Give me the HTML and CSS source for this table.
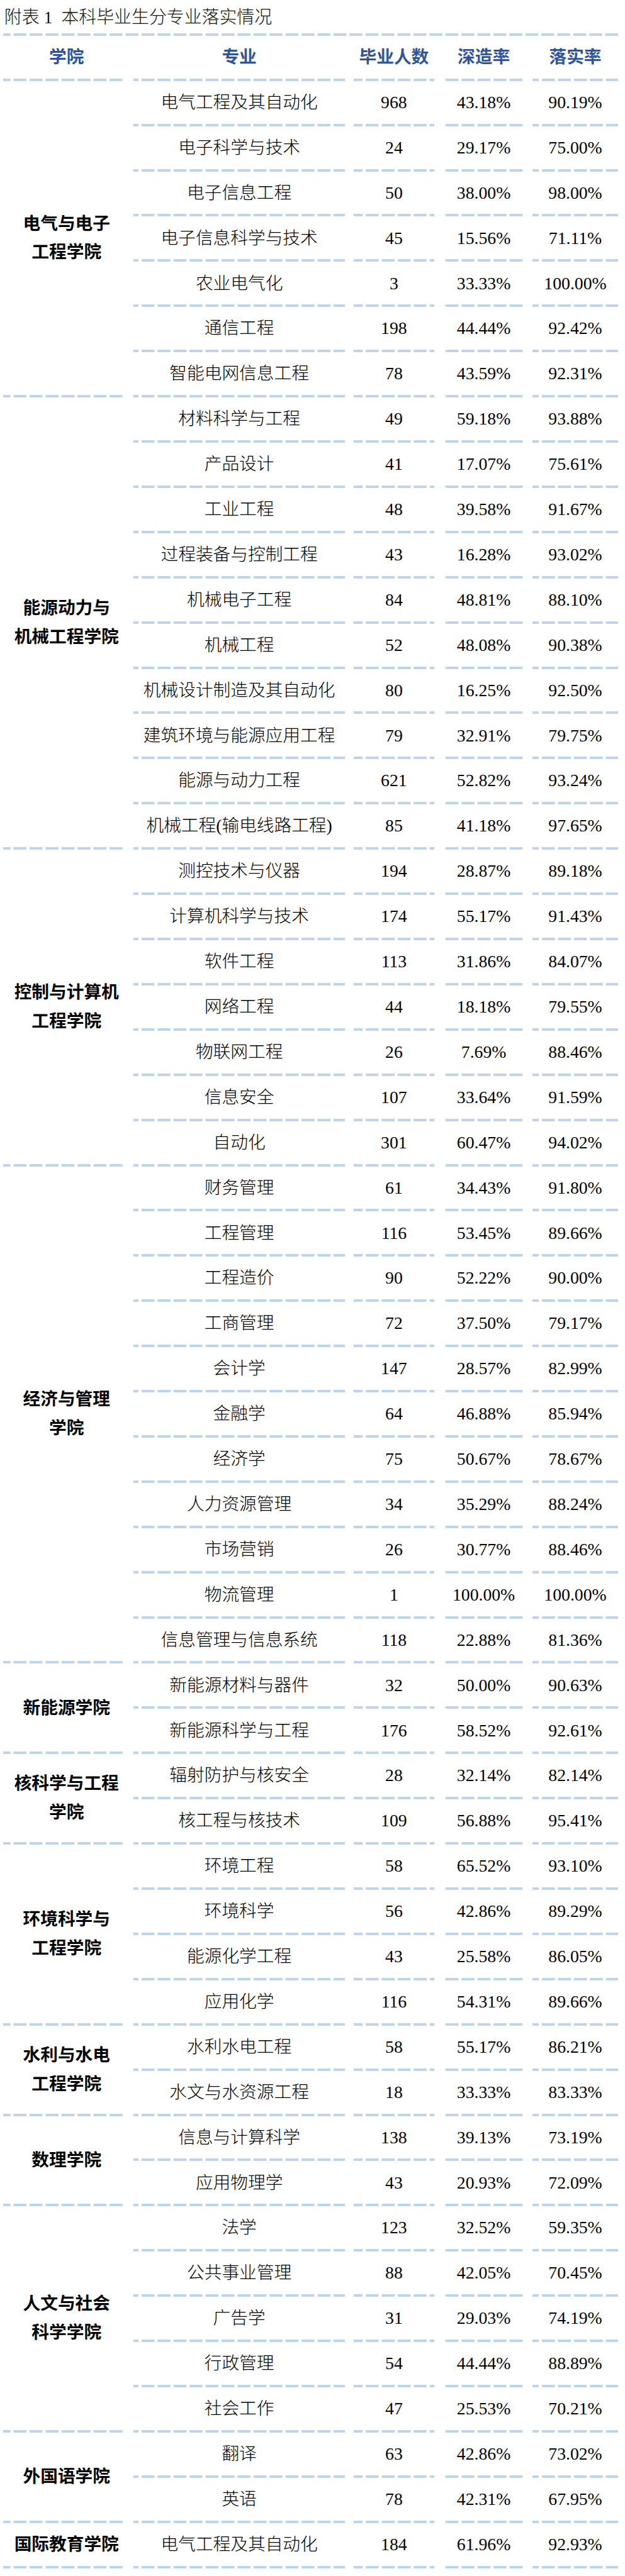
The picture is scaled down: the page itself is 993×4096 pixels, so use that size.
FILE: index.html
```html
<!DOCTYPE html>
<html lang="zh-CN">
<head>
<meta charset="utf-8">
<title>附表1 本科毕业生分专业落实情况</title>
<link rel="stylesheet" href="styles.css">
</head>
<body>
<div class="page">
  <div class="title">附表 1&nbsp;&nbsp;本科毕业生分专业落实情况</div>
  <div class="rule"></div>

  <div class="row head">
    <div class="c c1">学院</div>
    <div class="c c2">专业</div>
    <div class="c c3">毕业人数</div>
    <div class="c c4">深造率</div>
    <div class="c c5">落实率</div>
  </div>

  <div class="group">
    <div class="college">电气与电子<br>工程学院</div>
    <div class="majors">
      <div class="row"><div class="c c2">电气工程及其自动化</div><div class="c c3">968</div><div class="c c4">43.18%</div><div class="c c5">90.19%</div></div>
      <div class="row"><div class="c c2">电子科学与技术</div><div class="c c3">24</div><div class="c c4">29.17%</div><div class="c c5">75.00%</div></div>
      <div class="row"><div class="c c2">电子信息工程</div><div class="c c3">50</div><div class="c c4">38.00%</div><div class="c c5">98.00%</div></div>
      <div class="row"><div class="c c2">电子信息科学与技术</div><div class="c c3">45</div><div class="c c4">15.56%</div><div class="c c5">71.11%</div></div>
      <div class="row"><div class="c c2">农业电气化</div><div class="c c3">3</div><div class="c c4">33.33%</div><div class="c c5">100.00%</div></div>
      <div class="row"><div class="c c2">通信工程</div><div class="c c3">198</div><div class="c c4">44.44%</div><div class="c c5">92.42%</div></div>
      <div class="row"><div class="c c2">智能电网信息工程</div><div class="c c3">78</div><div class="c c4">43.59%</div><div class="c c5">92.31%</div></div>
    </div>
  </div>

  <div class="group">
    <div class="college">能源动力与<br>机械工程学院</div>
    <div class="majors">
      <div class="row"><div class="c c2">材料科学与工程</div><div class="c c3">49</div><div class="c c4">59.18%</div><div class="c c5">93.88%</div></div>
      <div class="row"><div class="c c2">产品设计</div><div class="c c3">41</div><div class="c c4">17.07%</div><div class="c c5">75.61%</div></div>
      <div class="row"><div class="c c2">工业工程</div><div class="c c3">48</div><div class="c c4">39.58%</div><div class="c c5">91.67%</div></div>
      <div class="row"><div class="c c2">过程装备与控制工程</div><div class="c c3">43</div><div class="c c4">16.28%</div><div class="c c5">93.02%</div></div>
      <div class="row"><div class="c c2">机械电子工程</div><div class="c c3">84</div><div class="c c4">48.81%</div><div class="c c5">88.10%</div></div>
      <div class="row"><div class="c c2">机械工程</div><div class="c c3">52</div><div class="c c4">48.08%</div><div class="c c5">90.38%</div></div>
      <div class="row"><div class="c c2">机械设计制造及其自动化</div><div class="c c3">80</div><div class="c c4">16.25%</div><div class="c c5">92.50%</div></div>
      <div class="row"><div class="c c2">建筑环境与能源应用工程</div><div class="c c3">79</div><div class="c c4">32.91%</div><div class="c c5">79.75%</div></div>
      <div class="row"><div class="c c2">能源与动力工程</div><div class="c c3">621</div><div class="c c4">52.82%</div><div class="c c5">93.24%</div></div>
      <div class="row"><div class="c c2">机械工程(输电线路工程)</div><div class="c c3">85</div><div class="c c4">41.18%</div><div class="c c5">97.65%</div></div>
    </div>
  </div>

  <div class="group">
    <div class="college">控制与计算机<br>工程学院</div>
    <div class="majors">
      <div class="row"><div class="c c2">测控技术与仪器</div><div class="c c3">194</div><div class="c c4">28.87%</div><div class="c c5">89.18%</div></div>
      <div class="row"><div class="c c2">计算机科学与技术</div><div class="c c3">174</div><div class="c c4">55.17%</div><div class="c c5">91.43%</div></div>
      <div class="row"><div class="c c2">软件工程</div><div class="c c3">113</div><div class="c c4">31.86%</div><div class="c c5">84.07%</div></div>
      <div class="row"><div class="c c2">网络工程</div><div class="c c3">44</div><div class="c c4">18.18%</div><div class="c c5">79.55%</div></div>
      <div class="row"><div class="c c2">物联网工程</div><div class="c c3">26</div><div class="c c4">7.69%</div><div class="c c5">88.46%</div></div>
      <div class="row"><div class="c c2">信息安全</div><div class="c c3">107</div><div class="c c4">33.64%</div><div class="c c5">91.59%</div></div>
      <div class="row"><div class="c c2">自动化</div><div class="c c3">301</div><div class="c c4">60.47%</div><div class="c c5">94.02%</div></div>
    </div>
  </div>

  <div class="group">
    <div class="college">经济与管理<br>学院</div>
    <div class="majors">
      <div class="row"><div class="c c2">财务管理</div><div class="c c3">61</div><div class="c c4">34.43%</div><div class="c c5">91.80%</div></div>
      <div class="row"><div class="c c2">工程管理</div><div class="c c3">116</div><div class="c c4">53.45%</div><div class="c c5">89.66%</div></div>
      <div class="row"><div class="c c2">工程造价</div><div class="c c3">90</div><div class="c c4">52.22%</div><div class="c c5">90.00%</div></div>
      <div class="row"><div class="c c2">工商管理</div><div class="c c3">72</div><div class="c c4">37.50%</div><div class="c c5">79.17%</div></div>
      <div class="row"><div class="c c2">会计学</div><div class="c c3">147</div><div class="c c4">28.57%</div><div class="c c5">82.99%</div></div>
      <div class="row"><div class="c c2">金融学</div><div class="c c3">64</div><div class="c c4">46.88%</div><div class="c c5">85.94%</div></div>
      <div class="row"><div class="c c2">经济学</div><div class="c c3">75</div><div class="c c4">50.67%</div><div class="c c5">78.67%</div></div>
      <div class="row"><div class="c c2">人力资源管理</div><div class="c c3">34</div><div class="c c4">35.29%</div><div class="c c5">88.24%</div></div>
      <div class="row"><div class="c c2">市场营销</div><div class="c c3">26</div><div class="c c4">30.77%</div><div class="c c5">88.46%</div></div>
      <div class="row"><div class="c c2">物流管理</div><div class="c c3">1</div><div class="c c4">100.00%</div><div class="c c5">100.00%</div></div>
      <div class="row"><div class="c c2">信息管理与信息系统</div><div class="c c3">118</div><div class="c c4">22.88%</div><div class="c c5">81.36%</div></div>
    </div>
  </div>

  <div class="group">
    <div class="college">新能源学院</div>
    <div class="majors">
      <div class="row"><div class="c c2">新能源材料与器件</div><div class="c c3">32</div><div class="c c4">50.00%</div><div class="c c5">90.63%</div></div>
      <div class="row"><div class="c c2">新能源科学与工程</div><div class="c c3">176</div><div class="c c4">58.52%</div><div class="c c5">92.61%</div></div>
    </div>
  </div>

  <div class="group">
    <div class="college">核科学与工程<br>学院</div>
    <div class="majors">
      <div class="row"><div class="c c2">辐射防护与核安全</div><div class="c c3">28</div><div class="c c4">32.14%</div><div class="c c5">82.14%</div></div>
      <div class="row"><div class="c c2">核工程与核技术</div><div class="c c3">109</div><div class="c c4">56.88%</div><div class="c c5">95.41%</div></div>
    </div>
  </div>

  <div class="group">
    <div class="college">环境科学与<br>工程学院</div>
    <div class="majors">
      <div class="row"><div class="c c2">环境工程</div><div class="c c3">58</div><div class="c c4">65.52%</div><div class="c c5">93.10%</div></div>
      <div class="row"><div class="c c2">环境科学</div><div class="c c3">56</div><div class="c c4">42.86%</div><div class="c c5">89.29%</div></div>
      <div class="row"><div class="c c2">能源化学工程</div><div class="c c3">43</div><div class="c c4">25.58%</div><div class="c c5">86.05%</div></div>
      <div class="row"><div class="c c2">应用化学</div><div class="c c3">116</div><div class="c c4">54.31%</div><div class="c c5">89.66%</div></div>
    </div>
  </div>

  <div class="group">
    <div class="college">水利与水电<br>工程学院</div>
    <div class="majors">
      <div class="row"><div class="c c2">水利水电工程</div><div class="c c3">58</div><div class="c c4">55.17%</div><div class="c c5">86.21%</div></div>
      <div class="row"><div class="c c2">水文与水资源工程</div><div class="c c3">18</div><div class="c c4">33.33%</div><div class="c c5">83.33%</div></div>
    </div>
  </div>

  <div class="group">
    <div class="college">数理学院</div>
    <div class="majors">
      <div class="row"><div class="c c2">信息与计算科学</div><div class="c c3">138</div><div class="c c4">39.13%</div><div class="c c5">73.19%</div></div>
      <div class="row"><div class="c c2">应用物理学</div><div class="c c3">43</div><div class="c c4">20.93%</div><div class="c c5">72.09%</div></div>
    </div>
  </div>

  <div class="group">
    <div class="college">人文与社会<br>科学学院</div>
    <div class="majors">
      <div class="row"><div class="c c2">法学</div><div class="c c3">123</div><div class="c c4">32.52%</div><div class="c c5">59.35%</div></div>
      <div class="row"><div class="c c2">公共事业管理</div><div class="c c3">88</div><div class="c c4">42.05%</div><div class="c c5">70.45%</div></div>
      <div class="row"><div class="c c2">广告学</div><div class="c c3">31</div><div class="c c4">29.03%</div><div class="c c5">74.19%</div></div>
      <div class="row"><div class="c c2">行政管理</div><div class="c c3">54</div><div class="c c4">44.44%</div><div class="c c5">88.89%</div></div>
      <div class="row"><div class="c c2">社会工作</div><div class="c c3">47</div><div class="c c4">25.53%</div><div class="c c5">70.21%</div></div>
    </div>
  </div>

  <div class="group">
    <div class="college">外国语学院</div>
    <div class="majors">
      <div class="row"><div class="c c2">翻译</div><div class="c c3">63</div><div class="c c4">42.86%</div><div class="c c5">73.02%</div></div>
      <div class="row"><div class="c c2">英语</div><div class="c c3">78</div><div class="c c4">42.31%</div><div class="c c5">67.95%</div></div>
    </div>
  </div>

  <div class="group last">
    <div class="college">国际教育学院</div>
    <div class="majors">
      <div class="row"><div class="c c2">电气工程及其自动化</div><div class="c c3">184</div><div class="c c4">61.96%</div><div class="c c5">92.93%</div></div>
    </div>
  </div>
</div>
</body>
</html>
```
FILE: styles.css
```css
html, body {
  margin: 0;
  padding: 0;
  background: #ffffff;
}

.page {
  width: 977px;
  padding-left: 5.3px;
  font-family: "Liberation Serif", "Noto Sans CJK SC", serif;
  font-size: 27.7px;
  color: #000000;
}

.title {
  height: 52.5px;
  box-sizing: border-box;
  padding-top: 4px;
  line-height: 48.5px;
  font-size: 27.9px;
  font-weight: 300;
  margin-left: 1.5px;
  white-space: nowrap;
  color: #111111;
}

/* dashed rule: one dash repeated along x, phase aligned across the table */
.rule,
.c,
.college {
  background-image: linear-gradient(to right, #bdd5ec 20.26px, rgba(255,255,255,0) 20.26px);
  background-repeat: repeat-x;
  background-size: 25.42px 4.1px;
}

.rule {
  height: 4.1px;
  background-position: -8.78px 0;
}

.row {
  display: flex;
  height: 71.92px;
}

.row.head {
  height: 72.25px;
}

.c {
  box-sizing: border-box;
  height: 100%;
  padding-bottom: 4.1px;
  display: flex;
  align-items: center;
  justify-content: center;
  white-space: nowrap;
  font-weight: 300;
  line-height: 1;
}

.c1 {
  width: 190.3px;
  margin-right: 16.7px;
  padding-left: 10.6px;
  background-position: -8.78px bottom;
}

.c2 {
  width: 335.7px;
  background-position: -12.42px bottom;
}

.c3 {
  width: 127.7px;
  margin-left: 14.1px;
  background-position: -6.34px bottom;
}

.c4 {
  width: 122.5px;
  margin-left: 17.6px;
  background-position: 0.88px bottom;
}

.c5 {
  width: 136.6px;
  margin-left: 15.9px;
  background-position: -10.42px bottom;
}

.row.head .c {
  color: #2f5597;
  font-weight: 700;
}

.group {
  display: flex;
}

.college {
  flex: none;
  width: 190.3px;
  margin-right: 16.7px;
  box-sizing: border-box;
  padding-left: 10.6px;
  padding-bottom: 4.1px;
  display: flex;
  align-items: center;
  justify-content: center;
  text-align: center;
  font-weight: 700;
  line-height: 45.8px;
  background-position: -8.78px bottom;
}

.majors {
  flex: none;
  width: 770px;
}

.majors .row .c2 {
  margin-left: 0;
}
```
